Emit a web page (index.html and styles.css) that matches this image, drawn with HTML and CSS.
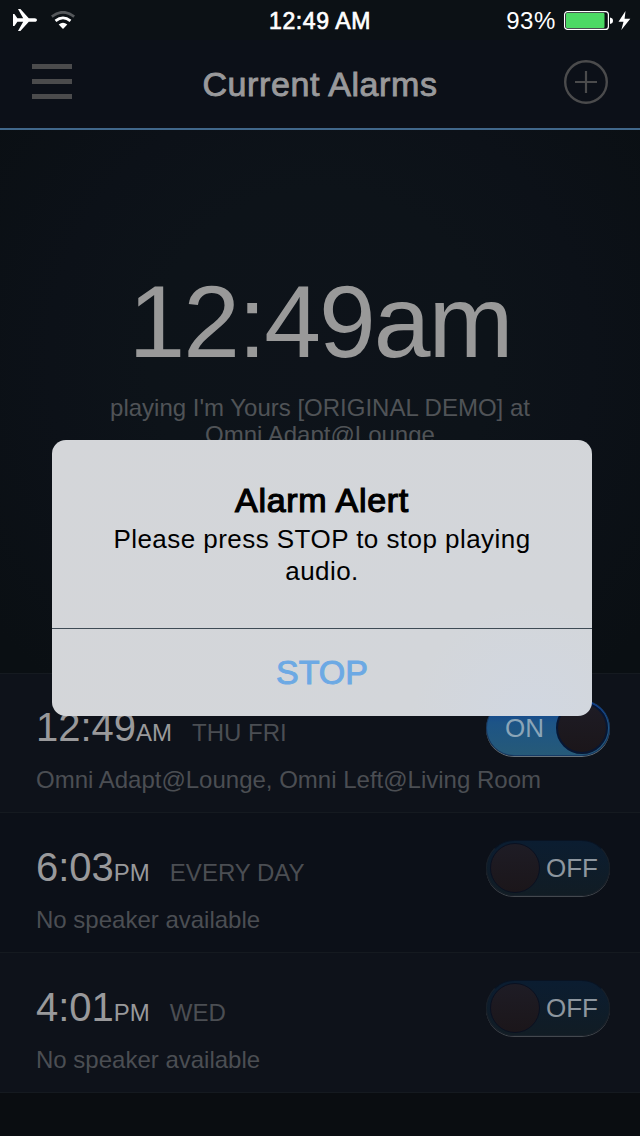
FILE: index.html
```html
<!DOCTYPE html>
<html lang="en">
<head>
<meta charset="utf-8">
<title>Current Alarms</title>
<link rel="stylesheet" href="styles.css">
</head>
<body>
<div class="screen">
  <div class="status">
    <div class="status-left">
      <svg class="plane" width="26" height="24" viewBox="0 0 26 24"><path d="M1 6h1.400l3 4.200h5.800L6 1h2.400l8.400 9.200h5.800c3.200 0 3.200 3.600 0 3.600h-5.800L8.400 23H6l5.200-9.200H5.400L2.400 18H1z" fill="#fff"/></svg>
      <svg class="wifi" width="24" height="18" viewBox="0 0 24 18"><path d="M.8 5.600Q12-3 23.200 5.600" fill="none" stroke="#55585b" stroke-width="2.800"/><path d="M4.500 9.800Q12 4 19.500 9.800" fill="none" stroke="#fff" stroke-width="2.800"/><path d="M7.700 13.600Q12 10 16.300 13.600L12 18z" fill="#fff"/></svg>
    </div>
    <div class="status-time">12:49 AM</div>
    <div class="status-right">
      <span class="percent">93%</span>
      <svg class="battery" width="68" height="22" viewBox="0 0 68 22"><rect x=".6" y="1.600" width="43.800" height="17.800" rx="3" fill="none" stroke="#fff" stroke-width="1.200"/><rect x="2" y="3" width="38.500" height="15" rx="1" fill="#4cd964"/><path d="M46 7.500q3 .5 3 3.200t-3 3.200z" fill="#fff"/><path d="M61.500 1L54.500 11.700h5L57.300 20 66.300 8.800h-5.700z" fill="#fff"/></svg>
    </div>
  </div>
  <div class="header">
    <svg class="menu" width="40" height="35" viewBox="0 0 40 35"><path d="M0 2.500h40M0 17.500h40M0 32.500h40" stroke="#4b4b4c" stroke-width="5"/></svg>
    <h1 class="title">Current Alarms</h1>
    <svg class="add" width="44" height="44" viewBox="0 0 44 44"><circle cx="22" cy="22" r="20.800" fill="none" stroke="#4b4b4c" stroke-width="2.400"/><path d="M11 22h22M22 11v22" stroke="#4b4b4c" stroke-width="2.200"/></svg>
  </div>
  <div class="hero">
    <div class="clock">12:49am</div>
    <div class="playing">playing I'm Yours [ORIGINAL DEMO] at<br>Omni Adapt@Lounge</div>
  </div>
  <div class="list">
    <div class="row first">
      <div class="info">
        <div class="when"><span class="time">12:49</span><span class="ampm">AM</span><span class="days">THU FRI</span></div>
        <div class="speaker">Omni Adapt@Lounge, Omni Left@Living Room</div>
      </div>
      <div class="toggle on"><span class="label">ON</span><span class="knob"></span></div>
    </div>
    <div class="row alt">
      <div class="info">
        <div class="when"><span class="time">6:03</span><span class="ampm">PM</span><span class="days">EVERY DAY</span></div>
        <div class="speaker">No speaker available</div>
      </div>
      <div class="toggle"><span class="knob"></span><span class="label">OFF</span></div>
    </div>
    <div class="row">
      <div class="info">
        <div class="when"><span class="time">4:01</span><span class="ampm">PM</span><span class="days">WED</span></div>
        <div class="speaker">No speaker available</div>
      </div>
      <div class="toggle"><span class="knob"></span><span class="label">OFF</span></div>
    </div>
  </div>
  <div class="alert">
    <div class="alert-body">
      <div class="alert-title">Alarm Alert</div>
      <div class="alert-text">Please press STOP to stop playing<br>audio.</div>
    </div>
    <div class="alert-button">STOP</div>
  </div>
</div>
</body>
</html>
```
FILE: styles.css
```css
* { box-sizing: border-box; }
body { margin: 0; background: #0a0d11; font-family: "Liberation Sans", Arial, sans-serif; }
.screen { position: relative; width: 640px; height: 1136px; overflow: hidden; display: flex; flex-direction: column; background: #0a0d11; }
.status { height: 40px; flex: none; display: grid; grid-template-columns: 1fr 120px 1fr; align-items: center; background: #0c1115; color: #fff; }
.status-left { display: flex; align-items: center; padding-left: 12px; gap: 13px; }
.status-time { text-align: center; white-space: nowrap; font-size: 23px; line-height: 26px; padding-top: 2px; letter-spacing: 0.6px; -webkit-text-stroke: 0.7px #fff; }
.status-right { display: flex; align-items: center; justify-content: flex-end; padding-right: 8px; gap: 8px; }
.percent { font-size: 24px; line-height: 26px; padding-top: 2px; letter-spacing: 0.6px; }
.battery { margin-top: 1px; }
.header { height: 90px; flex: none; display: grid; grid-template-columns: 140px 1fr 140px; align-items: start; padding: 20px 32px 0; background: #0c1018; border-bottom: 2px solid #41678a; }
.menu { margin-top: 4px; }
.title { margin: 4px 0 0; text-align: center; font-weight: 400; font-size: 34px; line-height: 40px; letter-spacing: 0.6px; color: #99999b; -webkit-text-stroke: 0.9px #99999b; white-space: nowrap; }
.add { justify-self: end; }
.hero { height: 543px; flex: none; padding-top: 134px; text-align: center; background: radial-gradient(circle at 320px 230px, #0e131a 0, #0d1319 170px, #0c1118 270px, #0a0f13 420px); }
.clock { font-size: 102px; line-height: 116px; letter-spacing: -2px; color: #999; }
.playing { margin-top: 14px; font-size: 24px; line-height: 27px; color: #505357; }
.list { flex: none; border-top: 1px solid #151a20; }
.row { height: 140px; display: flex; justify-content: space-between; padding: 27px 30px 0 36px; border-bottom: 1px solid #151a20; background: #0e121a; }
.row.first { height: 139px; padding-top: 26px; }
.row.alt { background: #0c1018; }
.info { width: 450px; flex: none; padding-top: 1px; }
.when { display: flex; align-items: baseline; height: 46px; line-height: 46px; padding-top: 3px; }
.time { font-size: 40px; color: #99999b; }
.ampm { font-size: 24px; color: #99999b; }
.days { font-size: 24px; margin-left: 20px; color: #4b4e53; }
.speaker { margin-top: 19px; font-size: 24px; line-height: 28px; color: #4b4e53; white-space: nowrap; }
.toggle { flex: none; width: 124px; height: 56px; border-radius: 28px; display: flex; align-items: center; padding: 0 3px; border: 1px solid #19212a; border-top-color: #091322; box-shadow: 0 1px 0 #43484e; background: linear-gradient(#0b1d31, #111c24); }
.knob { width: 50px; height: 50px; flex: none; border-radius: 50%; border: 1px solid #0a1020; background: linear-gradient(#1e1c25, #1b161a); }
.label { font-size: 26px; line-height: 30px; color: #8d969f; margin-left: 6px; }
.toggle.on { padding: 0 1px 0 18px; justify-content: space-between; border-color: #173b66; box-shadow: 0 1px 0 #68747c; background: linear-gradient(#0d3d99, #1d5486 40%, #265a78); }
.toggle.on .label { margin-left: 0; color: #8ba5b8; }
.toggle.on .knob { width: 52px; height: 52px; border: 2px solid #071633; }
.alert { position: absolute; left: 52px; top: 440px; width: 540px; height: 276px; border-radius: 14px; overflow: hidden; display: flex; flex-direction: column; text-align: center; color: #000; background: radial-gradient(circle at 480px 280px, #d1d7e1 0, #d3d6da 120px, #d4d6d9 100%); }
.alert-body { height: 189px; flex: none; padding-top: 40px; border-bottom: 1px solid #3e4b55; }
.alert-title { font-size: 34px; line-height: 40px; letter-spacing: 0.7px; -webkit-text-stroke: 1.2px #000; }
.alert-text { margin-top: 3px; font-size: 26px; line-height: 32px; letter-spacing: 0.45px; }
.alert-button { height: 87px; line-height: 87px; font-size: 34px; color: #6ca9e4; -webkit-text-stroke: 1px #6ca9e4; }
```
